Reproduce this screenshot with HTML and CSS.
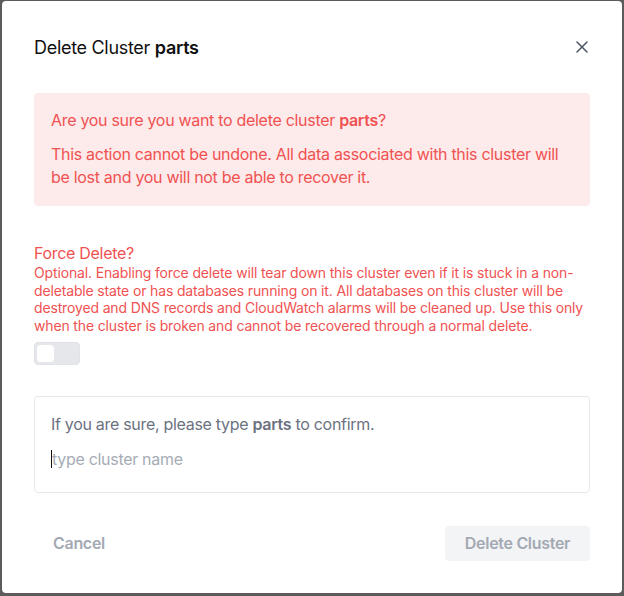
FILE: index.html
```html
<!DOCTYPE html>
<html>
<head>
<meta charset="utf-8">
<link rel="stylesheet" href="styles.css">
</head>
<body>
<div class="modal">
  <div class="header">
    <h2 class="title">Delete Cluster <b>parts</b></h2>
    <button class="close" aria-label="Close">
      <svg width="12" height="12" viewBox="0 0 12 12"><path d="M1 1L11 11M11 1L1 11" stroke="#4b5563" stroke-width="1.5" stroke-linecap="round"/></svg>
    </button>
  </div>
  <div class="alert">
    <p class="alert-q">Are you sure you want to delete cluster <b>parts</b>?</p>
    <p class="alert-t">This action cannot be undone. All data associated with this cluster will be lost and you will not be able to recover it.</p>
  </div>
  <div class="force">
    <div class="force-title">Force Delete?</div>
    <p class="force-desc">Optional. Enabling force delete will tear down this cluster even if it is stuck in a non-deletable state or has databases running on it. All databases on this cluster will be destroyed and DNS records and CloudWatch alarms will be cleaned up. Use this only when the cluster is broken and cannot be recovered through a normal delete.</p>
    <div class="toggle"><span class="knob"></span></div>
  </div>
  <div class="confirm">
    <p class="confirm-text">If you are sure, please type <b>parts</b> to confirm.</p>
    <div class="input"><span class="caret"></span><span class="placeholder">type cluster name</span></div>
  </div>
  <div class="footer">
    <button class="cancel">Cancel</button>
    <button class="delete">Delete Cluster</button>
  </div>
</div>
</body>
</html>
```
FILE: styles.css
```css
html, body { margin: 0; padding: 0; }
body {
  background: #5b5b5b;
  font-family: Inter, "Noto Sans", sans-serif;
  width: 624px;
  height: 596px;
  overflow: hidden;
}
.modal {
  margin: 1px 2px 0 2px;
  height: 592px;
  background: #fff;
  border-radius: 4px;
  padding: 0 32px;
  box-sizing: border-box;
}
.header {
  display: flex;
  align-items: center;
  justify-content: space-between;
  height: 92px;
}
.title {
  margin: 0;
  font-size: 18px;
  font-weight: 400;
  color: #111;
  letter-spacing: -0.3px;
}
.title b { font-weight: 600; }
.close {
  border: 0;
  background: none;
  padding: 0;
  width: 12px;
  height: 12px;
  display: flex;
  margin-right: 2px;
}
.alert {
  background: #fdeaea;
  border-radius: 4px;
  padding: 16px 17px 17px;
  color: #f05252;
  font-size: 16px;
  line-height: 23px;
  letter-spacing: -0.3px;
}
.alert p { margin: 0; }
.alert-q { margin-bottom: 11px !important; }
.alert b { font-weight: 600; }
.force {
  padding-top: 36px;
  color: #f05252;
}
.force-title {
  font-size: 16px;
  line-height: 22px;
  letter-spacing: -0.3px;
}
.force-desc {
  margin: 0;
  font-size: 14px;
  line-height: 17.7px;
  letter-spacing: -0.15px;
}
.toggle {
  margin-top: 7px;
  width: 46px;
  height: 23px;
  box-sizing: border-box;
  background: #e5e7eb;
  border: 1px solid #dfe2e6;
  border-radius: 4px;
  padding: 2px;
}
.knob {
  display: block;
  width: 17px;
  height: 17px;
  background: #fff;
  border-radius: 4px;
}
.confirm {
  margin-top: 31px;
  border: 1px solid #e5e7eb;
  border-radius: 4px;
  height: 97px;
  box-sizing: border-box;
  padding: 15px 16px 0;
}
.confirm-text {
  margin: 0;
  font-size: 16px;
  line-height: 24px;
  color: #6b7280;
  letter-spacing: -0.3px;
}
.confirm-text b { font-weight: 600; }
.input {
  margin-top: 11px;
  display: flex;
  align-items: center;
  height: 24px;
  font-size: 16px;
  color: #a6acb5;
  letter-spacing: -0.3px;
}
.caret {
  width: 1px;
  height: 18px;
  background: #111;
}
.footer {
  margin-top: 33px;
  display: flex;
  justify-content: space-between;
  align-items: center;
}
.cancel, .delete {
  font-family: inherit;
  font-size: 16px;
  font-weight: 600;
  color: #a3a9b3;
  border: 0;
  border-radius: 4px;
  height: 35px;
  white-space: nowrap;
  letter-spacing: -0.3px;
  cursor: pointer;
}
.cancel {
  background: none;
  padding: 0 19px;
}
.delete {
  background: #f3f4f6;
  width: 145px;
  padding: 0;
}
```
